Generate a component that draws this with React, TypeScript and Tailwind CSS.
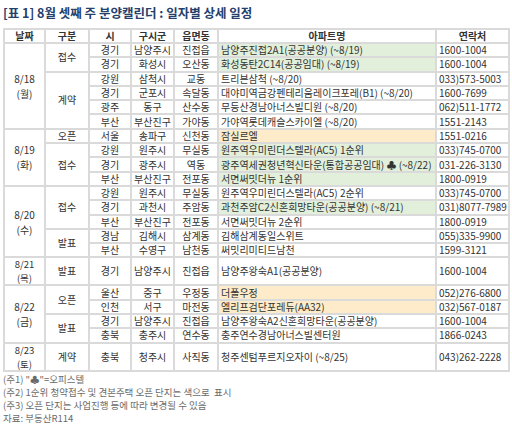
import React from 'react';

type Row = { si: string; gu: string; dong: string; apt: string; tel: string; tone?: 'g' | 'o'; tall?: boolean };
type Cat = { name: string; rows: Row[] };
type Day = { date: string; wd: string; cats: Cat[] };

const days: Day[] = [
  {
    date: '8/18', wd: '(월)', cats: [
      { name: '접수', rows: [
        { si: '경기', gu: '남양주시', dong: '진접읍', apt: '남양주진접2A1(공공분양) (~8/19)', tel: '1600-1004', tone: 'g' },
        { si: '경기', gu: '화성시', dong: '오산동', apt: '화성동탄2C14(공공임대) (~8/19)', tel: '1600-1004', tone: 'g' },
      ] },
      { name: '계약', rows: [
        { si: '강원', gu: '삼척시', dong: '교동', apt: '트리븐삼척 (~8/20)', tel: '033)573-5003' },
        { si: '경기', gu: '군포시', dong: '속달동', apt: '대야미역금강펜테리움레이크포레(B1) (~8/20)', tel: '1600-7699' },
        { si: '광주', gu: '동구', dong: '산수동', apt: '무등산경남아너스빌디원 (~8/20)', tel: '062)511-1772' },
        { si: '부산', gu: '부산진구', dong: '가야동', apt: '가야역롯데캐슬스카이엘 (~8/20)', tel: '1551-2143' },
      ] },
    ],
  },
  {
    date: '8/19', wd: '(화)', cats: [
      { name: '오픈', rows: [
        { si: '서울', gu: '송파구', dong: '신천동', apt: '잠실르엘', tel: '1551-0216', tone: 'o' },
      ] },
      { name: '접수', rows: [
        { si: '강원', gu: '원주시', dong: '무실동', apt: '원주역우미린더스텔라(AC5) 1순위', tel: '033)745-0700', tone: 'g' },
        { si: '경기', gu: '광주시', dong: '역동', apt: '광주역세권청년혁신타운(통합공공임대) ♣ (~8/22)', tel: '031-226-3130', tone: 'g' },
        { si: '부산', gu: '부산진구', dong: '전포동', apt: '서면써밋더뉴 1순위', tel: '1800-0919', tone: 'g' },
      ] },
    ],
  },
  {
    date: '8/20', wd: '(수)', cats: [
      { name: '접수', rows: [
        { si: '강원', gu: '원주시', dong: '무실동', apt: '원주역우미린더스텔라(AC5) 2순위', tel: '033)745-0700' },
        { si: '경기', gu: '과천시', dong: '주암동', apt: '과천주암C2신혼희망타운(공공분양) (~8/21)', tel: '031)8077-7989', tone: 'g' },
        { si: '부산', gu: '부산진구', dong: '전포동', apt: '서면써밋더뉴 2순위', tel: '1800-0919' },
      ] },
      { name: '발표', rows: [
        { si: '경남', gu: '김해시', dong: '삼계동', apt: '김해삼계동일스위트', tel: '055)335-9900' },
        { si: '부산', gu: '수영구', dong: '남천동', apt: '써밋리미티드남천', tel: '1599-3121' },
      ] },
    ],
  },
  {
    date: '8/21', wd: '(목)', cats: [
      { name: '발표', rows: [
        { si: '경기', gu: '남양주시', dong: '진접읍', apt: '남양주왕숙A1(공공분양)', tel: '1600-1004', tall: true },
      ] },
    ],
  },
  {
    date: '8/22', wd: '(금)', cats: [
      { name: '오픈', rows: [
        { si: '울산', gu: '중구', dong: '우정동', apt: '더폴우정', tel: '052)276-6800', tone: 'o' },
        { si: '인천', gu: '서구', dong: '마전동', apt: '엘리프검단포레듀(AA32)', tel: '032)567-0187', tone: 'o' },
      ] },
      { name: '발표', rows: [
        { si: '경기', gu: '남양주시', dong: '진접읍', apt: '남양주왕숙A2신혼희망타운(공공분양)', tel: '1600-1004' },
        { si: '충북', gu: '충주시', dong: '연수동', apt: '충주연수경남아너스빌센터원', tel: '1866-0243' },
      ] },
    ],
  },
  {
    date: '8/23', wd: '(토)', cats: [
      { name: '계약', rows: [
        { si: '충북', gu: '청주시', dong: '사직동', apt: '청주센텀푸르지오자이 (~8/25)', tel: '043)262-2228', tall: true },
      ] },
    ],
  },
];

const span: Record<number, string> = {
  1: 'row-span-1',
  2: 'row-span-2',
  3: 'row-span-3',
  4: 'row-span-4',
  5: 'row-span-5',
  6: 'row-span-6',
};

const base = 'bg-white flex items-center justify-center text-center whitespace-nowrap';
const mid = `${base} leading-none`;
const left = 'flex items-center pl-[2px] leading-none whitespace-nowrap';

export default function App() {
  const cells: React.ReactNode[] = [];
  days.forEach((d) => {
    const dayRows = d.cats.reduce((n, c) => n + c.rows.length, 0);
    const tallDay = dayRows === 1;
    d.cats.forEach((c, ci) => {
      c.rows.forEach((r, ri) => {
        const k = `${d.date}-${c.name}-${ri}`;
        const tone = r.tone === 'g' ? 'bg-[#e2efda]' : r.tone === 'o' ? 'bg-[#fdebc9]' : 'bg-white';
        if (ci === 0 && ri === 0) {
          cells.push(
            <div key={`${k}-d`} className={`${base} ${span[dayRows]} flex-col ${tallDay ? 'text-[9.5px] leading-[14px]' : 'leading-[15px]'}`}>
              <span>{d.date}</span>
              <span>{d.wd}</span>
            </div>
          );
        }
        if (ri === 0) {
          cells.push(<div key={`${k}-c`} className={`${mid} ${span[c.rows.length]}`}>{c.name}</div>);
        }
        cells.push(<div key={`${k}-si`} className={mid}>{r.si}</div>);
        cells.push(<div key={`${k}-gu`} className={mid}>{r.gu}</div>);
        cells.push(<div key={`${k}-dong`} className={mid}>{r.dong}</div>);
        cells.push(<div key={`${k}-apt`} className={`${left} ${tone}`}>{r.apt}</div>);
        cells.push(<div key={`${k}-tel`} className={`${left} bg-white`}>{r.tel}</div>);
      });
    });
  });

  const head = ['날짜', '구분', '시', '구시군', '읍면동', '아파트명', '연락처'];

  return (
    <div className="w-[512px] h-[429px] bg-white overflow-hidden text-[#333]" style={{ fontFamily: '"Noto Sans CJK KR", sans-serif' }}>
      <div className="pl-[3px] pt-[5px] h-[28px] text-[12.5px] font-bold text-[#24406c] leading-[16px]">
        [표 1] 8월 셋째 주 분양캘린더 : 일자별 상세 일정
      </div>
      <div className="ml-[3px] w-[507px] grid grid-cols-[39px_42px_40px_41px_42px_216px_71px] grid-rows-[12px_repeat(15,12.3px)_26px_repeat(4,12.3px)_26px] gap-[2px] p-[2px] bg-[#dadada] text-[10px]">
        {head.map((h) => (
          <div key={h} className={`${mid} font-bold`}>{h}</div>
        ))}
        {cells}
      </div>
      <div className="pl-[3px] pt-[1px] text-[9.5px] leading-[13px] text-[#6b6b6b]">
        <div>(주1) "♣"=오피스텔</div>
        <div>(주2) 1순위 청약접수 및 견본주택 오픈 단지는 색으로&nbsp; 표시</div>
        <div>(주3) 오픈 단지는 사업진행 등에 따라 변경될 수 있음</div>
        <div>자료: 부동산R114</div>
      </div>
    </div>
  );
}
